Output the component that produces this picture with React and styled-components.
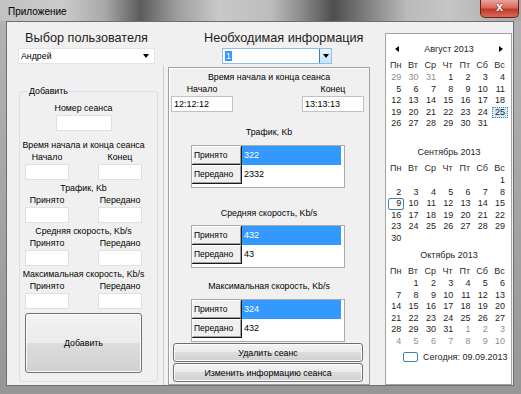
import React from "react";
import styled, { createGlobalStyle } from "styled-components";

const GlobalStyle = createGlobalStyle`
	html, body {
		margin: 0;
		padding: 0;
	}
	body {
		width: 521px;
		height: 394px;
		overflow: hidden;
		font-family: "Liberation Sans", Arial, sans-serif;
		color: #000;
	}
`;

const Window = styled.div`
	width: 521px;
	height: 394px;
	display: flex;
	flex-direction: column;
	background: linear-gradient(180deg, #b4b4b4 0%, #a2a2a2 60%, #969696 100%);
`;

const TitleBar = styled.div`
	height: 21px;
	flex-shrink: 0;
	display: flex;
	align-items: flex-start;
	background: linear-gradient(
		90deg,
		#c2c2c2 0%,
		#cbcbcb 12%,
		#a9a9a9 20%,
		#5c5c5c 27%,
		#9e9e9e 34%,
		#c9c9c9 42%,
		#bcbcbc 52%,
		#8a8a8a 58%,
		#4e4e4e 64%,
		#7c7c7c 70%,
		#b9b9b9 78%,
		#c6c6c6 86%,
		#a8a8a8 100%
	);
`;

const Caption = styled.div`
	padding: 6px 0 0 8px;
	font-size: 10px;
	line-height: 12px;
	color: #000;
`;

const CloseButton = styled.div`
	margin-left: auto;
	margin-right: 2px;
	width: 39px;
	height: 18px;
	box-sizing: border-box;
	border: 1px solid #6b2019;
	border-top: none;
	border-radius: 0 0 5px 5px;
	background: linear-gradient(180deg, #e9a59a 0%, #d9695c 45%, #c23a28 55%, #d66a58 100%);
	color: #fff;
	font-weight: bold;
	font-size: 12px;
	line-height: 15px;
	text-align: center;
	text-shadow: 0 0 2px #5a1010;
`;

const Client = styled.div`
	flex: 1;
	margin: 0 7px 8px 6px;
	border: 1px solid #6e6e6e;
	background: #f0f0f0;
	display: flex;
	min-height: 0;
`;

const LeftColumn = styled.div`
	width: 157px;
	display: flex;
	flex-direction: column;
`;

const MiddleColumn = styled.div`
	width: 216px;
	display: flex;
	flex-direction: column;
`;

const RightColumn = styled.div`
	flex: 1;
	display: flex;
	flex-direction: column;
	padding: 11px 1px 0 5px;
`;

const Heading = styled.div`
	margin: 8px 0 0 ${(p) => p.$indent}px;
	width: ${(p) => p.$width}px;
	font-size: 12.7px;
	line-height: 16px;
	color: #1c1c1c;
	white-space: nowrap;
	text-align: ${(p) => (p.$center ? "center" : "left")};
`;

const Combo = styled.div`
	margin: 2px 0 0 ${(p) => p.$indent}px;
	width: ${(p) => p.$width}px;
	height: 16px;
	box-sizing: border-box;
	display: flex;
	align-items: center;
	background: #fff;
	border: 1px solid ${(p) => (p.$focus ? "#8fbde9" : "#e4e4e4")};
	font-size: 8.8px;
`;

const ComboText = styled.span`
	flex: 1;
	padding-left: 2px;
`;

const Selected = styled.span`
	background: #3399ff;
	color: #fff;
	padding: 0 1px;
`;

const DropButton = styled.div`
	width: 12px;
	align-self: stretch;
	display: flex;
	align-items: center;
	justify-content: center;
	box-sizing: border-box;
	border-left: 1px solid ${(p) => (p.$focus ? "#3c7fb1" : "transparent")};
	background: ${(p) => (p.$focus ? "linear-gradient(180deg, #eaf6fd, #bee6fd)" : "transparent")};
	margin-right: ${(p) => (p.$focus ? 0 : 3)}px;
`;

const Triangle = styled.span`
	width: 0;
	height: 0;
	border-left: 3px solid transparent;
	border-right: 3px solid transparent;
	border-top: 4px solid #000;
`;

const LeftPanel = styled.div`
	flex: 1;
	display: flex;
	margin-top: 1px;
	padding: 20px 5px 3px 12px;
	border-right: 1px solid #cfcfcf;
`;

const GroupBox = styled.fieldset`
	flex: 1;
	min-width: 0;
	margin: 0;
	padding: 0 15px 7px 5px;
	border: 1px solid #d5dfe5;
	border-radius: 3px;
	display: flex;
	flex-direction: column;
`;

const Legend = styled.legend`
	margin-left: 2px;
	padding: 0 2px;
	font-size: 8.8px;
	line-height: 12px;
`;

const Label = styled.div`
	display: flex;
	justify-content: center;
	white-space: nowrap;
	font-size: 8.8px;
	line-height: 12px;
	margin-top: ${(p) => p.$gap || 0}px;
`;

const PairRow = styled.div`
	display: grid;
	grid-template-columns: ${(p) => p.$col}px ${(p) => p.$col}px;
	justify-content: space-between;
	padding: ${(p) => p.$pad};
`;

const Field = styled.div`
	display: flex;
	flex-direction: column;
	align-items: center;
`;

const TextBox = styled.div`
	width: ${(p) => p.$width || "100%"};
	height: 16px;
	margin-top: 1px;
	box-sizing: border-box;
	background: #fff;
	border: 1px solid ${(p) => (p.$strong ? "#c2c2c2" : "#e0e0e0")};
	font-size: 9px;
	line-height: 14px;
	padding-left: 2px;
	align-self: ${(p) => (p.$center ? "center" : "stretch")};
`;

const Button = styled.div`
	box-sizing: border-box;
	height: ${(p) => p.$height}px;
	margin: ${(p) => p.$margin};
	border: 1px solid #707070;
	border-radius: 3px;
	background: linear-gradient(180deg, #f3f3f3 0%, #ebebeb 50%, #dddddd 50%, #d0d0d0 100%);
	box-shadow: inset 0 0 0 1px #fcfcfc;
	display: flex;
	align-items: center;
	justify-content: center;
	font-size: 8.8px;
`;

const InfoPanel = styled.div`
	flex: 1;
	width: 202px;
	box-sizing: border-box;
	margin: 3px 0 0 4px;
	padding: 3px 0 0;
	border: 1px solid #a0a0a0;
	box-shadow: inset 1px 1px 0 #fff;
	display: flex;
	flex-direction: column;
`;

const Grid = styled.div`
	margin: ${(p) => p.$gap}px 0 0 22px;
	width: 154px;
	box-sizing: border-box;
	border: 1px solid #ababab;
	background: #fff;
	padding: 0 3px 3px 0;
	display: grid;
	grid-template-rows: 19px 19px;
`;

const GridRow = styled.div`
	display: grid;
	grid-template-columns: 50px 1fr;
`;

const HeadCell = styled.div`
	background: #f0f0f0;
	border-right: 1px solid #1a1a1a;
	border-bottom: 1px solid #1a1a1a;
	box-shadow: inset 1px 1px 0 #fff, inset -1px -1px 0 #a0a0a0;
	padding-left: 2px;
	font-size: 8.5px;
	line-height: 18px;
`;

const ValueCell = styled.div`
	background: ${(p) => (p.$active ? "#3399ff" : "#fff")};
	color: ${(p) => (p.$active ? "#fff" : "#000")};
	padding-left: 2px;
	font-size: 9px;
	line-height: 18px;
`;

const Calendar = styled.div`
	flex: 1;
	box-sizing: border-box;
	border: 1px solid #a3a3a3;
	background: #fff;
	padding: 7px 0 0 1px;
	font-size: 9px;
	color: #1e1e1e;
	white-space: nowrap;
`;

const Month = styled.div`
	height: 103px;
`;

const MonthHeader = styled.div`
	height: 16px;
	display: grid;
	grid-template-columns: 20px 1fr 20px;
	align-items: center;
	justify-items: center;
`;

const Arrow = styled.span`
	width: 0;
	height: 0;
	border-top: 3px solid transparent;
	border-bottom: 3px solid transparent;
	${(p) => (p.$dir === "left" ? "border-right: 4px solid #000;" : "border-left: 4px solid #000;")}
`;

const Days = styled.div`
	display: grid;
	grid-template-columns: repeat(7, 17.3px);
	height: ${(p) => p.$height}px;
	margin-top: ${(p) => p.$gap || 0}px;
	line-height: ${(p) => p.$height}px;
`;

const DayName = styled.div`
	text-align: center;
	color: #2a2a2a;
`;

const Day = styled.div`
	box-sizing: border-box;
	text-align: right;
	padding-right: 2px;
	line-height: 9.5px;
	margin: 0 0 0 1px;
	border: 1px ${(p) => (p.$selected ? "dotted #4f86c0" : "solid")};
	border-color: ${(p) => (p.$selected || p.$today ? "#3c7fb1" : "transparent")};
	border-radius: ${(p) => (p.$today ? 2 : 0)}px;
	background: ${(p) => (p.$selected ? "#d5e8f8" : "transparent")};
	color: ${(p) => (p.$muted ? "#8e8e8e" : "#1e1e1e")};
`;

const TodayRow = styled.div`
	height: 14px;
	display: flex;
	align-items: center;
	padding-left: 16px;
`;

const TodayMark = styled.span`
	width: 15px;
	height: 10px;
	box-sizing: border-box;
	border: 1px solid #3c7fb1;
	border-radius: 2px;
	margin-right: 5px;
`;

const dayNames = ["Пн", "Вт", "Ср", "Чт", "Пт", "Сб", "Вс"];

// [number, muted] pairs, null for an empty cell
const range = (a, b, muted = false) => {
	const out = [];
	for (let i = a; i <= b; i++) out.push([i, muted]);
	return out;
};

const months = [
	{
		title: "Август 2013",
		arrows: true,
		days: [...range(29, 31, true), ...range(1, 31)],
		selected: 25,
	},
	{
		title: "Сентябрь 2013",
		days: [null, null, null, null, null, null, ...range(1, 30)],
		today: 9,
	},
	{
		title: "Октябрь 2013",
		days: [null, ...range(1, 31), ...range(1, 10, true)],
	},
];

const toWeeks = (days) => {
	const weeks = [];
	for (let i = 0; i < 6; i++) weeks.push(days.slice(i * 7, i * 7 + 7));
	return weeks;
};

const MonthView = ({ month }) => (
	<Month>
		<MonthHeader>
			{month.arrows ? <Arrow $dir="left" /> : <span />}
			<span>{month.title}</span>
			{month.arrows ? <Arrow $dir="right" /> : <span />}
		</MonthHeader>
		<Days $height={14} $gap={1}>
			{dayNames.map((d) => (
				<DayName key={d}>{d}</DayName>
			))}
		</Days>
		{toWeeks(month.days).map((week, wi) => (
			<Days key={wi} $height={11.5}>
				{week.map((d, di) =>
					d ? (
						<Day
							key={di}
							$muted={d[1]}
							$selected={!d[1] && d[0] === month.selected}
							$today={!d[1] && d[0] === month.today}
						>
							{d[0]}
						</Day>
					) : (
						<span key={di} />
					)
				)}
			</Days>
		))}
	</Month>
);

const InputPair = ({ left, right, col, pad, values = [], strong }) => (
	<PairRow $col={col} $pad={pad}>
		<Field>
			<Label>{left}</Label>
			<TextBox $strong={strong}>{values[0]}</TextBox>
		</Field>
		<Field>
			<Label>{right}</Label>
			<TextBox $strong={strong}>{values[1]}</TextBox>
		</Field>
	</PairRow>
);

const ValueGrid = ({ gap, received, sent }) => (
	<Grid $gap={gap}>
		<GridRow>
			<HeadCell>Принято</HeadCell>
			<ValueCell $active>{received}</ValueCell>
		</GridRow>
		<GridRow>
			<HeadCell>Передано</HeadCell>
			<ValueCell>{sent}</ValueCell>
		</GridRow>
	</Grid>
);

export default function App() {
	return (
		<Window>
			<GlobalStyle />
			<TitleBar>
				<Caption>Приложение</Caption>
				<CloseButton>x</CloseButton>
			</TitleBar>
			<Client>
				<LeftColumn>
					<Heading $indent={11} $width={137} $center>
						Выбор пользователя
					</Heading>
					<Combo $indent={11} $width={137}>
						<ComboText>Андрей</ComboText>
						<DropButton>
							<Triangle />
						</DropButton>
					</Combo>
					<LeftPanel>
						<GroupBox>
							<Legend>Добавить</Legend>
							<Label $gap={5}>Номер сеанса</Label>
							<TextBox $width="56px" $center />
							<Label $gap={8}>Время начала и конца сеанса</Label>
							<InputPair left="Начало" right="Конец" col={44} pad="0" />
							<Label $gap={2}>Трафик, Kb</Label>
							<InputPair left="Принято" right="Передано" col={44} pad="0" />
							<Label $gap={2}>Средняя скорость, Kb/s</Label>
							<InputPair left="Принято" right="Передано" col={44} pad="0" />
							<Label $gap={2}>Максимальная скорость, Kb/s</Label>
							<InputPair left="Принято" right="Передано" col={44} pad="0" />
							<Button $height={60} $margin="4px 0 0">
								Добавить
							</Button>
						</GroupBox>
					</LeftPanel>
				</LeftColumn>
				<MiddleColumn>
					<Heading $indent={40}>Необходимая информация</Heading>
					<Combo $indent={58} $width={110} $focus>
						<ComboText>
							<Selected>1</Selected>
						</ComboText>
						<DropButton $focus>
							<Triangle />
						</DropButton>
					</Combo>
					<InfoPanel>
						<Label>Время начала и конца сеанса</Label>
						<InputPair
							left="Начало"
							right="Конец"
							col={62}
							pad="0 5px 0 2px"
							values={["12:12:12", "13:13:13"]}
							strong
						/>
						<Label $gap={14}>Трафик, Kb</Label>
						<ValueGrid gap={7} received="322" sent="2332" />
						<Label $gap={19}>Средняя скорость, Kb/s</Label>
						<ValueGrid gap={6} received="432" sent="43" />
						<Label $gap={12}>Максимальная скорость, Kb/s</Label>
						<ValueGrid gap={7} received="324" sent="432" />
						<Button $height={19} $margin="1px 6px 0 4px">
							Удалить сеанс
						</Button>
						<Button $height={19} $margin="1px 6px 0 4px">
							Изменить информацию сеанса
						</Button>
					</InfoPanel>
				</MiddleColumn>
				<RightColumn>
					<Calendar>
						{months.map((m) => (
							<MonthView key={m.title} month={m} />
						))}
						<TodayRow>
							<TodayMark />
							Сегодня: 09.09.2013
						</TodayRow>
					</Calendar>
				</RightColumn>
			</Client>
		</Window>
	);
}
